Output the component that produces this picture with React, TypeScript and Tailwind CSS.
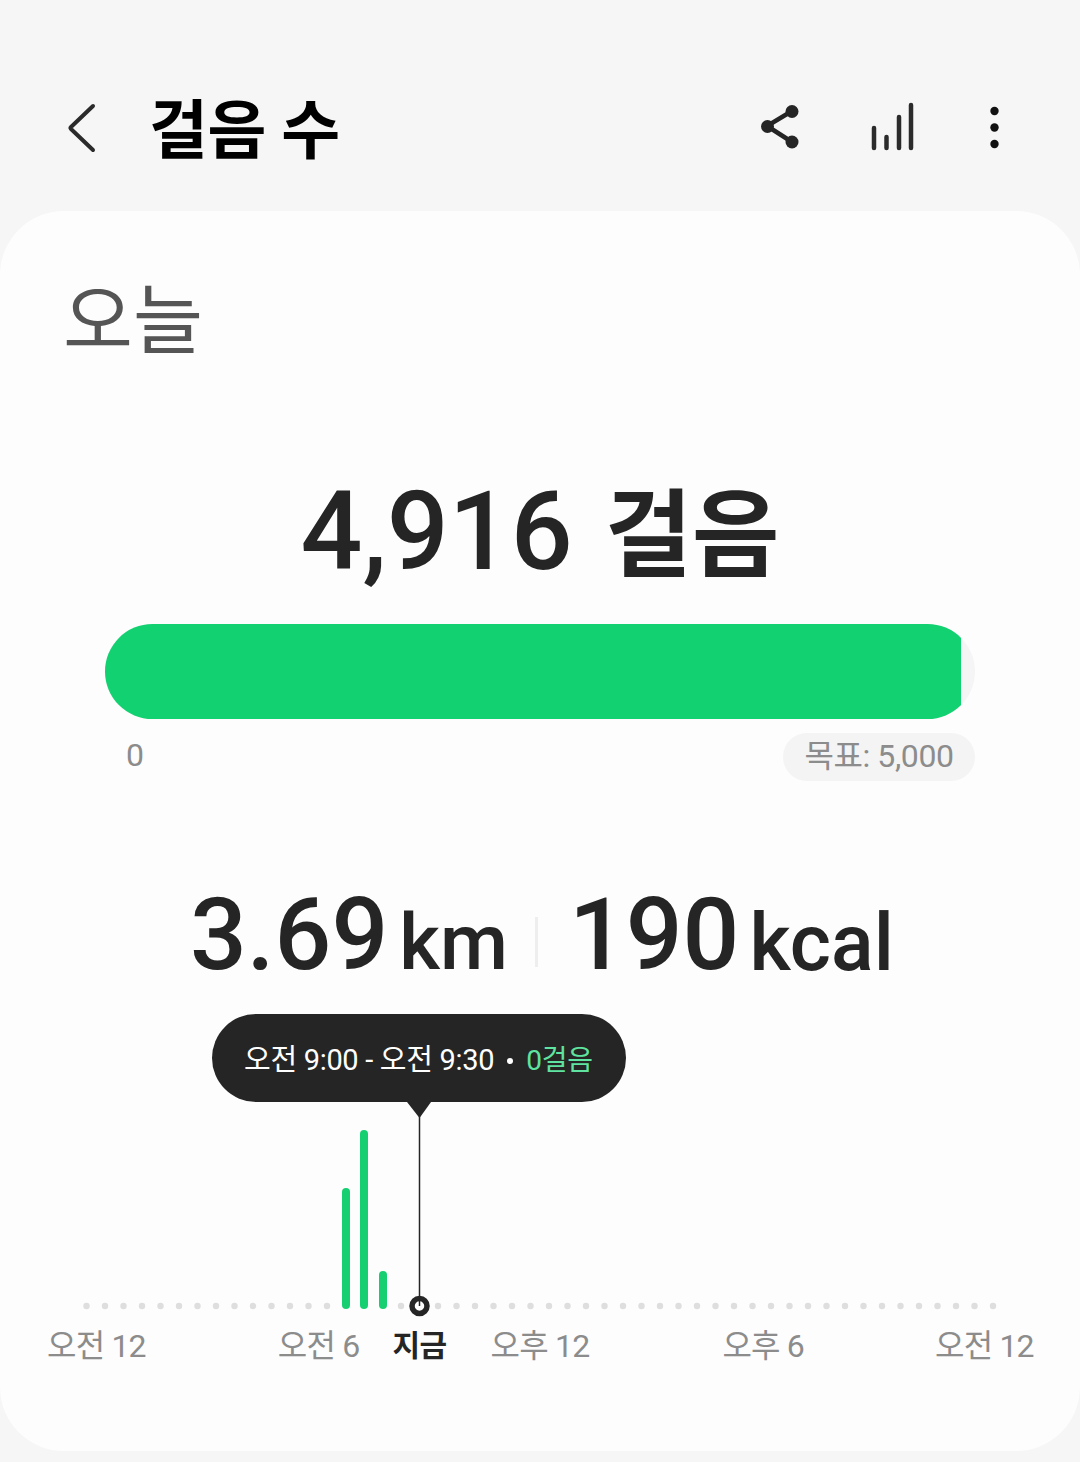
const font = { fontFamily: '"Roboto", "Noto Sans CJK KR", sans-serif' };

const dots = Array.from({ length: 50 }, (_, i) => 86.5 + i * 18.5).filter((x) => x < 335 || x > 395);

function AxisLabel({ text, className }: { text: string; className: string }) {
  return <span className={`whitespace-nowrap text-[32px] leading-[40px] tracking-[-0.8px] text-[#8c8c8c] ${className}`}>{text}</span>;
}

export default function App() {
  return (
    <div className="h-[1462px] w-[1080px] overflow-hidden bg-[#f6f6f6]" style={font}>
      <header className="relative flex h-[211px] items-start">
        <svg className="ml-[66px] mt-[101px] shrink-0" width="32" height="54" viewBox="0 0 32 54" fill="none">
          <path d="M27 5 L5 26 Q4 27 5 28 L27 49" stroke="#2b2b2b" strokeWidth="4" strokeLinecap="round" strokeLinejoin="round" />
        </svg>
        <h1 className="ml-[51px] mt-[94px] text-[64px] font-bold leading-[76px] tracking-[-0.5px] text-black">걸음 수</h1>
        <div className="absolute right-0 top-0">
          <svg width="1080" height="211" className="block" viewBox="0 0 1080 211" fill="none">
            <g stroke="#252525" strokeWidth="4.500">
              <path d="M792 111 L767 126 L792 142" />
            </g>
            <g fill="#252525">
              <circle cx="792" cy="111.500" r="6.500" />
              <circle cx="767.500" cy="126.500" r="6.500" />
              <circle cx="792" cy="142" r="6.500" />
            </g>
            <g stroke="#2b2b2b" strokeWidth="4.500" strokeLinecap="round">
              <path d="M874 128 V148" />
              <path d="M886.500 137 V148" />
              <path d="M899 117 V148" />
              <path d="M911 105 V148" />
            </g>
            <g fill="#111">
              <circle cx="994.500" cy="111" r="4.200" />
              <circle cx="994.500" cy="127.500" r="4.200" />
              <circle cx="994.500" cy="144" r="4.200" />
            </g>
          </svg>
        </div>
      </header>

      <main className="h-[1240px] rounded-[64px] bg-[#fdfdfd]">
        <h2 className="pl-[63px] pt-[67px] text-[76px] font-normal leading-[88px] text-[#555]">오늘</h2>

        <div className="mt-[106px] flex h-[120px] items-baseline justify-center leading-[120px] text-[#252525]">
          <span className="text-[109px] font-medium">4,916</span>
          <span className="ml-[32px] text-[95px] font-semibold">걸음</span>
        </div>

        <div className="mx-[105px] mt-[32px] h-[95px] overflow-hidden rounded-full bg-[#f5f5f5]">
          <div className="h-full w-[856px] bg-[#12d170]" />
        </div>
        <div className="mx-[105px] mt-[14px] flex items-center justify-between">
          <span className="mb-[4px] ml-[21px] text-[32px] leading-[40px] text-[#8c8c8c]">0</span>
          <span className="flex h-[48px] w-[192px] items-center justify-center whitespace-nowrap rounded-full bg-[#f4f4f4] pb-[3px] text-[32px] tracking-[-0.4px] text-[#8c8c8c]">목표: 5,000</span>
        </div>

        <div className="mt-[94px] flex h-[120px] items-end pl-[190px] text-[#252525]">
          <span className="text-[100px] font-medium leading-[120px]">3.69</span>
          <span className="ml-[11px] text-[78px] font-medium leading-[104px]">km</span>
          <span className="mb-[28px] ml-[27px] h-[50px] w-[3px] bg-[#eeeeee]" />
          <span className="ml-[31px] text-[100px] font-medium leading-[120px]">190</span>
          <span className="ml-[10px] text-[79px] font-medium leading-[104px]">kcal</span>
        </div>

        <div className="relative mt-[19px] h-[306px]">
          <svg className="block" width="1080" height="306" viewBox="0 1014 1080 306" fill="none">
            {dots.map((x) => (
              <circle key={x} cx={x} cy="1306" r="3.200" fill="#dedede" />
            ))}
            <rect x="342" y="1188" width="8" height="121" rx="4" fill="#16cf70" />
            <rect x="360" y="1130" width="8" height="179" rx="4" fill="#16cf70" />
            <rect x="379" y="1271" width="8" height="38" rx="4" fill="#16cf70" />
            <path d="M407 1102 H431 L419.500 1118 Z" fill="#252525" />
            <circle cx="419.500" cy="1306" r="7.500" fill="#fdfdfd" stroke="#252525" strokeWidth="5.500" />
            <path d="M419.500 1110 V1306" stroke="#252525" strokeWidth="1.500" />
          </svg>
          <div className="absolute left-[212px] top-0 flex h-[88px] w-[414px] items-center whitespace-nowrap rounded-[44px] bg-[#252525] pl-[32px] pt-[5px] text-[29px] tracking-[-0.3px] text-white">
            <span>오전 9:00 - 오전 9:30</span>
            <span className="ml-[13px] h-[6px] w-[6px] rounded-full bg-white" />
            <span className="ml-[13px] text-[28px] text-[#5fe3a0]">0걸음</span>
          </div>
        </div>

        <div className="mt-[6px] flex pl-[47px]">
          <AxisLabel text="오전 12" className="" />
          <AxisLabel text="오전 6" className="ml-[132px]" />
          <span className="ml-[33px] whitespace-nowrap text-[30px] font-bold leading-[40px] tracking-[-0.5px] text-[#252525]">지금</span>
          <AxisLabel text="오후 12" className="ml-[44px]" />
          <AxisLabel text="오후 6" className="ml-[133px]" />
          <AxisLabel text="오전 12" className="ml-[131px]" />
        </div>
      </main>
    </div>
  );
}
